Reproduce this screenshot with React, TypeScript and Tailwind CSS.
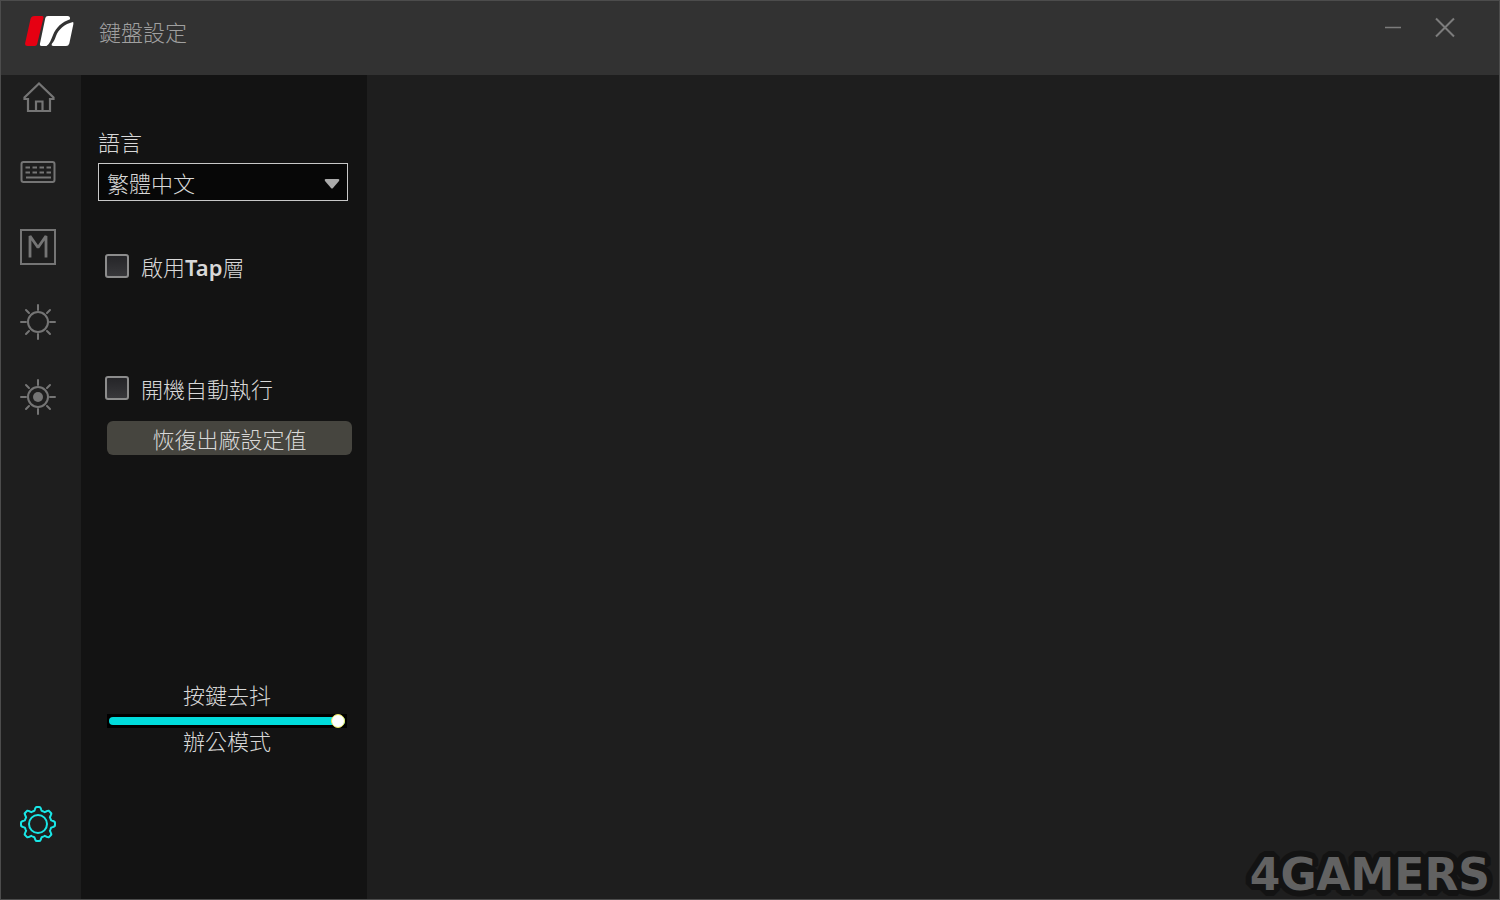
import { useState, type ReactNode } from "react";
import clsx from "clsx";

function Logo() {
  return (
    <svg width="50" height="32" viewBox="0 0 50 32" aria-hidden="true">
      <path
        d="M9.500 1H16.800Q18.900 1 18.400 3L12.200 29Q11.700 31 9.700 31H2.500Q-.6 31 .2 28L5.500 4Q6.300 1 9.500 1Z"
        fill="#e60012"
      />
      <path
        d="M23 1H42.500Q45.300 1 45 4.300C37 7 31 12.500 28 20C26 25 24.500 29 21.500 31H16.500Q14.400 31 14.900 29L20.300 3Q20.800 1 23 1Z"
        fill="#fff"
      />
      <path
        d="M48 7C39.500 9 33.500 14.500 31 21C29.500 25 28.500 27 27 28.500Q25.800 31 28.500 31H41Q43.600 31 44.300 28.500L48.300 9.500Q48.700 7 48 7Z"
        fill="#fff"
      />
    </svg>
  );
}

function HomeIcon() {
  return (
    <svg width="36" height="36" viewBox="0 0 36 36" fill="none" stroke="currentColor" strokeWidth="2.200">
      <path d="M8 20H4.500V18.500L19 4.500L33.500 18.500V20H30V32H8ZM16 32V22.500H22.500V32" />
    </svg>
  );
}

function KeyboardIcon() {
  return (
    <svg width="36" height="36" viewBox="0 0 36 36" fill="none" stroke="currentColor" strokeWidth="2">
      <rect x="1.500" y="8" width="33" height="20" rx="2" />
      <path d="M5.500 13.500H31M5.500 18.500H31" strokeDasharray="4.500 2.500" />
      <path d="M6 23.500H31" />
    </svg>
  );
}

function MacroIcon() {
  return (
    <svg width="36" height="36" viewBox="0 0 36 36" fill="none" stroke="currentColor">
      <rect x="1" y="1" width="34" height="34" strokeWidth="2" />
      <path d="M10 28.500V7L18 18.500L26 7V28.500" strokeWidth="2.800" strokeLinejoin="bevel" />
    </svg>
  );
}

function SunIcon({ filled }: { filled?: boolean }) {
  return (
    <svg
      width="36"
      height="36"
      viewBox="0 0 36 36"
      fill="none"
      stroke="currentColor"
      strokeWidth="2"
      strokeLinecap="round"
    >
      <circle cx="18" cy="18" r="10" />
      {filled && <circle cx="18" cy="18" r="5" fill="currentColor" stroke="none" />}
      <path d="M18 1V6M18 30V35M1 18H6M30 18H35M6 6L9 9M27 27L30 30M30 6L27 9M9 27L6 30" />
    </svg>
  );
}

// eight soft teeth: a cosine around the circle with its peaks flattened
const gearPoints = Array.from({ length: 160 }, (_, i) => {
  const a = (i / 160) * Math.PI * 2;
  const r = 15.3 + 1.7 * Math.max(-1, Math.min(1, 1.8 * Math.cos(8 * a)));
  return `${(18 + r * Math.cos(a)).toFixed(2)},${(18 + r * Math.sin(a)).toFixed(2)}`;
}).join(" ");

function GearIcon() {
  return (
    <svg
      width="36"
      height="36"
      viewBox="0 0 36 36"
      fill="none"
      stroke="currentColor"
      strokeWidth="2"
      strokeLinejoin="round"
    >
      <circle cx="18" cy="18" r="9" />
      <polygon points={gearPoints} />
    </svg>
  );
}

function NavButton({ label, active, children }: { label: string; active?: boolean; children: ReactNode }) {
  return (
    <button
      type="button"
      aria-label={label}
      className={clsx("size-9 cursor-pointer", active ? "text-[#19e6e6]" : "text-[#757575] hover:text-[#a0a0a0]")}
    >
      {children}
    </button>
  );
}

function CheckRow({ id, children }: { id: string; children: ReactNode }) {
  return (
    <div className="flex h-8 items-center gap-3 pl-2">
      <input
        id={id}
        type="checkbox"
        className="size-6 shrink-0 appearance-none rounded-[3px] border-2 border-[#8c8c8c] bg-linear-to-b from-[#252528] to-[#38383b] checked:from-[#00dcdc] checked:to-[#00dcdc]"
      />
      <label htmlFor={id}>{children}</label>
    </div>
  );
}

function DebounceSlider() {
  const [value, setValue] = useState(100);

  return (
    <div className="ml-2.5 flex w-60 flex-col items-center">
      <label htmlFor="debounce" className="leading-8">
        按鍵去抖
      </label>
      <div className="mt-1 flex h-3.5 w-full items-center bg-black px-0.5">
        <input
          id="debounce"
          type="range"
          min={0}
          max={100}
          value={value}
          onChange={(e) => setValue(Number(e.target.value))}
          style={{ backgroundImage: `linear-gradient(to right, #00dcdc ${value}%, #333 ${value}%)` }}
          className="h-2 w-full appearance-none rounded-full [&::-webkit-slider-thumb]:size-3.5 [&::-webkit-slider-thumb]:appearance-none [&::-webkit-slider-thumb]:rounded-full [&::-webkit-slider-thumb]:border [&::-webkit-slider-thumb]:border-[#e6e65a] [&::-webkit-slider-thumb]:bg-white"
        />
      </div>
      <output htmlFor="debounce" className="leading-6">
        辦公模式
      </output>
    </div>
  );
}

export default function App() {
  return (
    <div className="flex min-h-screen flex-col border border-[#4c4c4c] bg-[#1e1e1e] font-['Noto_Sans_CJK_TC','Noto_Sans',sans-serif] text-[22px] leading-8 font-light text-[#d8d8d8]">
      <header className="flex h-[74px] items-start justify-between bg-[#323232] pr-10 pl-6">
        <div className="flex items-center gap-6 pt-3.5">
          <Logo />
          <h1 className="text-[#a0a0a0]">鍵盤設定</h1>
        </div>
        <div className="flex items-center gap-6 pt-3 text-[#7c7c7c]">
          <button type="button" aria-label="最小化" className="cursor-pointer">
            <svg width="28" height="28" viewBox="0 0 28 28" stroke="currentColor" strokeWidth="1.500">
              <path d="M6 14.500H22" />
            </svg>
          </button>
          <button type="button" aria-label="關閉" className="cursor-pointer">
            <svg width="28" height="28" viewBox="0 0 28 28" stroke="currentColor" strokeWidth="2">
              <path d="M5 5.500L23 23.500M23 5.500L5 23.500" />
            </svg>
          </button>
        </div>
      </header>

      <div className="flex flex-1">
        <nav className="flex w-20 shrink-0 flex-col justify-between pt-1 pb-[57px] pl-[19px]">
          <div className="flex flex-col gap-[39px]">
            <NavButton label="首頁">
              <HomeIcon />
            </NavButton>
            <NavButton label="鍵盤">
              <KeyboardIcon />
            </NavButton>
            <NavButton label="巨集">
              <MacroIcon />
            </NavButton>
            <NavButton label="燈光">
              <SunIcon />
            </NavButton>
            <NavButton label="自訂燈光">
              <SunIcon filled />
            </NavButton>
          </div>
          <NavButton label="設定" active>
            <GearIcon />
          </NavButton>
        </nav>

        <aside className="flex w-[286px] shrink-0 flex-col justify-between bg-[#131313] px-4 pt-[50px] pb-[147px]">
          <div className="flex flex-col">
            <label htmlFor="language" className="pl-px">
              語言
            </label>
            <div className="relative mt-1.5 ml-px w-[250px]">
              <select
                id="language"
                defaultValue="zh-TW"
                className="h-[38px] w-full appearance-none border border-[#c8c8c8] bg-[#070707] pl-2"
              >
                <option value="zh-TW">繁體中文</option>
                <option value="en">English</option>
              </select>
              <svg
                className="pointer-events-none absolute top-4 right-2"
                width="16"
                height="10"
                viewBox="0 0 16 10"
                fill="#ababab"
              >
                <path d="M1.500 0H14.500Q16 .5 15 2L9 9Q8 10 7 9L1 2Q0 .5 1.500 0Z" />
              </svg>
            </div>

            <div className="mt-[49px] flex flex-col gap-[90px]">
              <CheckRow id="tap-layer">
                啟用<span className="font-['Noto_Sans'] font-semibold">Tap</span>層
              </CheckRow>
              <CheckRow id="autostart">開機自動執行</CheckRow>
            </div>
            <button
              type="button"
              className="mt-[17px] ml-2.5 h-[34px] w-[245px] cursor-pointer rounded-md bg-[#46453f] hover:bg-[#55544d]"
            >
              恢復出廠設定值
            </button>
          </div>

          <DebounceSlider />
        </aside>

        <main className="flex flex-1 items-end justify-end pr-1">
          <svg width="260" height="56" viewBox="0 0 260 56" role="img" aria-label="4GAMERS" className="overflow-visible">
            <text
              x="255"
              y="47"
              textAnchor="end"
              fontSize="44"
              fill="#626262"
              stroke="#131313"
              strokeWidth="12"
              strokeLinejoin="bevel"
              paintOrder="stroke"
              className="font-['DejaVu_Sans'] font-bold"
            >
              4GAMERS
            </text>
          </svg>
        </main>
      </div>
    </div>
  );
}
